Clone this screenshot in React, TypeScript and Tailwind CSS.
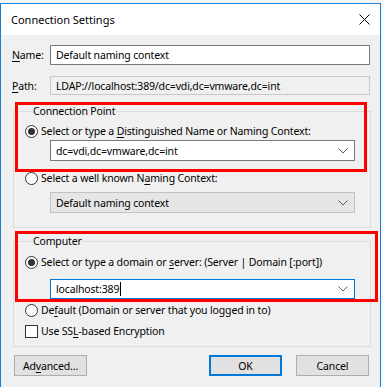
import React from "react";

const Radio = ({ checked = false }: { checked?: boolean }) => (
  <span className="flex h-[13px] w-[13px] shrink-0 items-center justify-center rounded-full border border-[#333333] bg-white">
    {checked && <span className="h-[7px] w-[7px] rounded-full bg-[#333333]" />}
  </span>
);

const Chevron = () => (
  <svg width="10" height="6" viewBox="0 0 10 6" className="shrink-0">
    <path d="M0.5 0.5 L5 5 L9.5 0.5" fill="none" stroke="#5a5a5a" strokeWidth="1" />
  </svg>
);

interface ComboProps {
  value: string;
  disabled?: boolean;
  focused?: boolean;
  caret?: boolean;
}

const Combo = ({ value, disabled, focused, caret }: ComboProps) => (
  <div
    className={
      disabled
        ? "flex h-[21px] w-[305px] items-center justify-between border border-[#c2c2c2] bg-[#e6e6e6] pl-[5px] pr-[6px]"
        : focused
          ? "flex h-[20px] w-[305px] items-center justify-between border border-[#0078d7] bg-white pl-[5px] pr-[6px]"
          : "flex h-[21px] w-[305px] items-center justify-between border border-[#7a7a7a] bg-white pl-[5px] pr-[6px]"
    }
  >
    <span className="flex items-center">
      {value}
      {caret && <span className="ml-[1px] h-[14px] w-[1px] bg-black" />}
    </span>
    <Chevron />
  </div>
);

const App = () => {
  return (
    <div className="relative h-[387px] w-[383px] overflow-hidden whitespace-nowrap bg-[#f4f6f8] pt-[3px] font-['Segoe_UI','Noto_Sans',sans-serif] text-[10.5px] leading-[16px] tracking-[-0.15px] text-black">
      <div className="h-[384px] w-[381px] border-x border-t border-[#1a7fd4] bg-[#f0f0f0]">
        {/* title bar */}
        <div className="flex h-[31px] items-center justify-between bg-white pl-[10px] pr-[10px]">
          <span className="text-[11px] tracking-normal">Connection Settings</span>
          <svg width="11" height="11" viewBox="0 0 11 11">
            <path d="M0.5 0.5 L10.5 10.5 M10.5 0.5 L0.5 10.5" stroke="#000" strokeWidth="1" />
          </svg>
        </div>

        <div className="pl-[11px] pr-[10px]">
          {/* name */}
          <div className="mt-[10px] flex h-[20px] items-center">
            <span className="w-[38px]">
              <u className="underline-offset-2">N</u>ame:
            </span>
            <div className="flex h-[20px] flex-1 items-center border border-[#7a7a7a] bg-white pl-[5px]">
              Default naming context
            </div>
          </div>

          {/* path */}
          <div className="mt-[11px] flex h-[19px] items-center">
            <span className="w-[38px]">
              <u className="underline-offset-2">P</u>ath:
            </span>
            <div className="flex h-[19px] flex-1 items-center border border-[#c8c8c8] bg-[#f0f0f0] pl-[5px]">
              LDAP://localhost:389/dc=vdi,dc=vmware,dc=int
            </div>
          </div>

          {/* connection point */}
          <fieldset className="ml-[1px] mt-[8px] w-[358px] border border-[#dcdcdc] pb-[14px] pl-[11px]">
            <legend className="ml-[7px] px-[1px]">Connection Point</legend>
            <div className="mt-[4px] flex h-[16px] items-center gap-[3px]">
              <Radio checked />
              <span>
                Select or type a <u className="underline-offset-2">D</u>istinguished Name or Naming Context:
              </span>
            </div>
            <div className="ml-[25px] mt-[1px]">
              <Combo value="dc=vdi,dc=vmware,dc=int" />
            </div>
            <div className="mt-[9px] flex h-[16px] items-center gap-[3px]">
              <Radio />
              <span>
                Select a well known N<u className="underline-offset-2">a</u>ming Context:
              </span>
            </div>
            <div className="ml-[25px] mt-[6px]">
              <Combo value="Default naming context" disabled />
            </div>
          </fieldset>

          {/* computer */}
          <fieldset className="ml-[1px] mt-[5px] w-[358px] border border-[#dcdcdc] pb-[7px] pl-[11px]">
            <legend className="ml-[7px] px-[1px]">Computer</legend>
            <div className="mt-[5px] flex h-[16px] items-center gap-[3px]">
              <Radio checked />
              <span>
                Select or type a domain or <u className="underline-offset-2">s</u>erver: (Server | Domain [:port])
              </span>
            </div>
            <div className="ml-[25px] mt-[9px]">
              <Combo value="localhost:389" focused caret />
            </div>
            <div className="mt-[3px] flex h-[16px] items-center gap-[3px]">
              <Radio />
              <span>
                De<u className="underline-offset-2">f</u>ault (Domain or server that you logged in to)
              </span>
            </div>
            <div className="mt-[5px] flex h-[16px] items-center gap-[3px]">
              <span className="h-[13px] w-[13px] shrink-0 border border-[#333333] bg-white" />
              <span>
                Use SS<u className="underline-offset-2">L</u>-based Encryption
              </span>
            </div>
          </fieldset>

          {/* buttons */}
          <div className="mt-[8px] flex items-center">
            <button className="ml-[2px] h-[21px] w-[73px] border border-[#adadad] bg-[#e1e1e1]">
              Ad<u className="underline-offset-2">v</u>anced...
            </button>
            <div className="flex-1" />
            <button className="h-[21px] w-[73px] border-2 border-[#0078d7] bg-[#e1e1e1]">OK</button>
            <button className="ml-[14px] mr-[1px] h-[21px] w-[73px] border border-[#adadad] bg-[#e1e1e1]">
              Cancel
            </button>
          </div>
        </div>
      </div>

      {/* red annotation boxes */}
      <div className="absolute left-[15px] top-[102px] h-[70px] w-[352px] border-[3px] border-[#ff0000]" />
      <div className="absolute left-[15px] top-[231px] h-[71px] w-[363px] border-[3px] border-[#ff0000]" />
    </div>
  );
};

export default App;
